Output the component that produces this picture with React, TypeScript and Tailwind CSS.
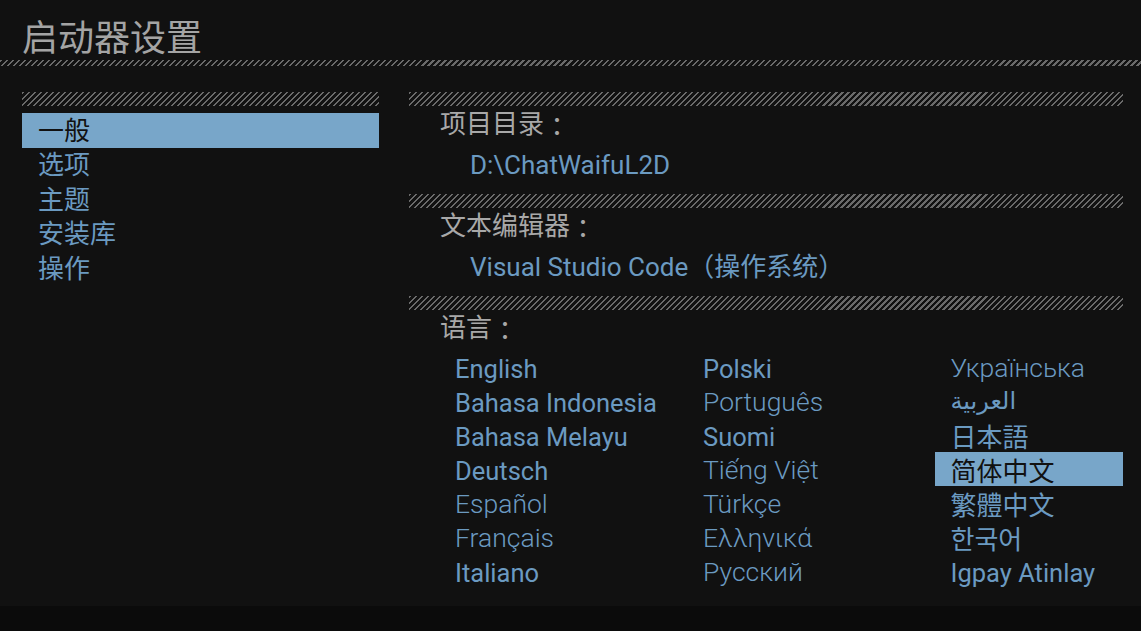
const cjk = "font-['Roboto','Noto_Sans_CJK_SC',sans-serif]";

const stripes =
  "bg-[repeating-linear-gradient(135deg,#6a6a6a_0px,#6a6a6a_1.6px,transparent_1.6px,transparent_4.25px)]";

const navItems = ["一般", "选项", "主题", "安装库", "操作"];

type Lang = { name: string; light?: boolean; font?: string; active?: boolean };

const columns: Lang[][] = [
  [
    { name: "English" },
    { name: "Bahasa Indonesia" },
    { name: "Bahasa Melayu" },
    { name: "Deutsch" },
    { name: "Español", light: true },
    { name: "Français", light: true },
    { name: "Italiano" },
  ],
  [
    { name: "Polski" },
    { name: "Português", light: true },
    { name: "Suomi" },
    { name: "Tiếng Việt", light: true },
    { name: "Türkçe", light: true },
    { name: "Ελληνικά", light: true },
    { name: "Русский", light: true },
  ],
  [
    { name: "Українська", light: true },
    { name: "العربية", font: "font-['DejaVu_Sans',sans-serif] text-[24px]" },
    { name: "日本語", font: "font-['Noto_Sans_CJK_JP',sans-serif] text-[26px]" },
    { name: "简体中文", font: "font-['Noto_Sans_CJK_SC',sans-serif] text-[26px]", active: true },
    { name: "繁體中文", font: "font-['Noto_Sans_CJK_TC',sans-serif] text-[26px]" },
    { name: "한국어", font: "font-['Noto_Sans_CJK_KR',sans-serif] text-[26px]" },
    { name: "Igpay Atinlay" },
  ],
];

// fullwidth colon sits centred in its cell in the original
const Colon = () => <span className="font-['Noto_Sans_CJK_TC',sans-serif]">：</span>;

const Label = ({ text }: { text: string }) => (
  <div className="h-[36px] pl-[31px] flex items-center text-[26px] text-[#a8a8a8]">
    {text}
    <Colon />
  </div>
);

const Section = ({ label, value }: { label: string; value: string }) => (
  <div className="h-[102px]">
    <div className={`h-[14px] ${stripes}`} />
    <Label text={label} />
    <div className="h-[40px] pl-[61px] pt-[6px] flex items-center text-[26px] text-[#6b9ac1]">{value}</div>
  </div>
);

const langClass = (lang: Lang) => {
  if (lang.font) return lang.font;
  return lang.light ? "pt-[2px] font-light text-[26.5px]" : "pt-[5px] text-[25.5px]";
};

export default function App() {
  return (
    <div className={`w-[1141px] h-[631px] bg-[#111111] flex flex-col ${cjk}`}>
      <div className="h-[606px] flex flex-col">
        {/* header */}
        <div className="h-[60px] pl-[22px] pt-[21px] text-[36px] leading-[36px] text-[#a4a4a4]">启动器设置</div>
        <div className={`h-[6px] ${stripes}`} />

        <div className="flex pt-[26px]">
          {/* left nav */}
          <div className="ml-[22px] w-[357px]">
            <div className={`h-[14px] ${stripes}`} />
            <div className="mt-[7px]">
              {navItems.map((item, i) => (
                <div
                  key={item}
                  className={`h-[34.5px] pl-[16px] pt-[2px] flex items-center text-[26px] ${
                    i === 0 ? "bg-[#78a6c9] text-[#111111]" : "text-[#6b9ac1]"
                  }`}
                >
                  {item}
                </div>
              ))}
            </div>
          </div>

          {/* right content */}
          <div className="ml-[30px] w-[714px]">
            <Section label="项目目录" value="D:\ChatWaifuL2D" />
            <Section label="文本编辑器" value="Visual Studio Code（操作系统）" />
            <div className={`h-[14px] ${stripes}`} />
            <Label text="语言" />
            <div className="mt-[4px] pl-[30px] flex gap-[59px]">
              {columns.map((col, ci) => (
                <div key={ci} className="w-[189px] flex flex-col">
                  {col.map((lang) => (
                    <div
                      key={lang.name}
                      className={`h-[34px] pl-[16px] flex items-center whitespace-nowrap ${langClass(lang)} ${
                        lang.active ? "bg-[#78a6c9] text-[#111111]" : "text-[#6b9ac1]"
                      }`}
                    >
                      {lang.name}
                    </div>
                  ))}
                </div>
              ))}
            </div>
          </div>
        </div>
      </div>
      <div className="flex-1 bg-[#0b0b0b]" />
    </div>
  );
}
